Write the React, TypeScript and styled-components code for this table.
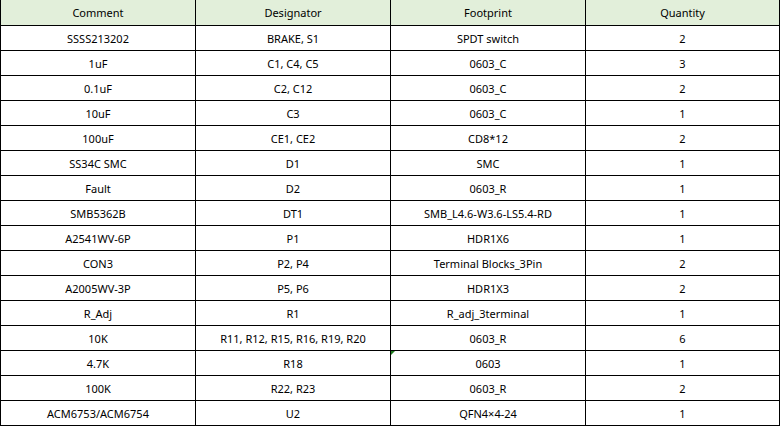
import { Fragment } from "react";
import styled, { createGlobalStyle } from "styled-components";

const GlobalStyle = createGlobalStyle`
  body {
    margin: 0;
    background: #ffffff;
  }
`;

const Sheet = styled.div`
  display: grid;
  grid-template-columns: 194px 194px 194px 193px;
  grid-template-rows: 25px;
  grid-auto-rows: 24px;
  gap: 1px;
  padding: 0 1px 1px 1px;
  width: fit-content;
  background: #000000;
  font-family: "Noto Sans", "Liberation Sans", sans-serif;
  font-size: 11px;
  color: #000000;
`;

const HeaderCell = styled.div`
  display: flex;
  align-items: center;
  justify-content: center;
  background: #e2efda;
  white-space: nowrap;
`;

const Cell = styled.div<{ $flag?: boolean }>`
  position: relative;
  display: flex;
  align-items: center;
  justify-content: center;
  background: #ffffff;
  white-space: nowrap;

  ${(p) =>
    p.$flag &&
    `
    &::before {
      content: "";
      position: absolute;
      left: 0;
      top: 0;
      border-top: 4px solid #1e7b1e;
      border-right: 4px solid transparent;
    }
  `}
`;

const columns = ["Comment", "Designator", "Footprint", "Quantity"];

// comment, designator, footprint, qty, green "number as text" marker
const parts: [string, string, string, number, boolean?][] = [
  ["SSSS213202", "BRAKE, S1", "SPDT switch", 2],
  ["1uF", "C1, C4, C5", "0603_C", 3],
  ["0.1uF", "C2, C12", "0603_C", 2],
  ["10uF", "C3", "0603_C", 1],
  ["100uF", "CE1, CE2", "CD8*12", 2],
  ["SS34C SMC", "D1", "SMC", 1],
  ["Fault", "D2", "0603_R", 1],
  ["SMB5362B", "DT1", "SMB_L4.6-W3.6-LS5.4-RD", 1],
  ["A2541WV-6P", "P1", "HDR1X6", 1],
  ["CON3", "P2, P4", "Terminal Blocks_3Pin", 2],
  ["A2005WV-3P", "P5, P6", "HDR1X3", 2],
  ["R_Adj", "R1", "R_adj_3terminal", 1],
  ["10K", "R11, R12, R15, R16, R19, R20", "0603_R", 6],
  ["4.7K", "R18", "0603", 1, true],
  ["100K", "R22, R23", "0603_R", 2],
  ["ACM6753/ACM6754", "U2", "QFN4×4-24", 1],
];

export default function App() {
  return (
    <>
      <GlobalStyle />
      <Sheet>
        {columns.map((c) => (
          <HeaderCell key={c}>{c}</HeaderCell>
        ))}
        {parts.map(([comment, designator, footprint, qty, flag]) => (
          <Fragment key={comment}>
            <Cell>{comment}</Cell>
            <Cell>{designator}</Cell>
            <Cell $flag={flag}>{footprint}</Cell>
            <Cell>{qty}</Cell>
          </Fragment>
        ))}
      </Sheet>
    </>
  );
}
